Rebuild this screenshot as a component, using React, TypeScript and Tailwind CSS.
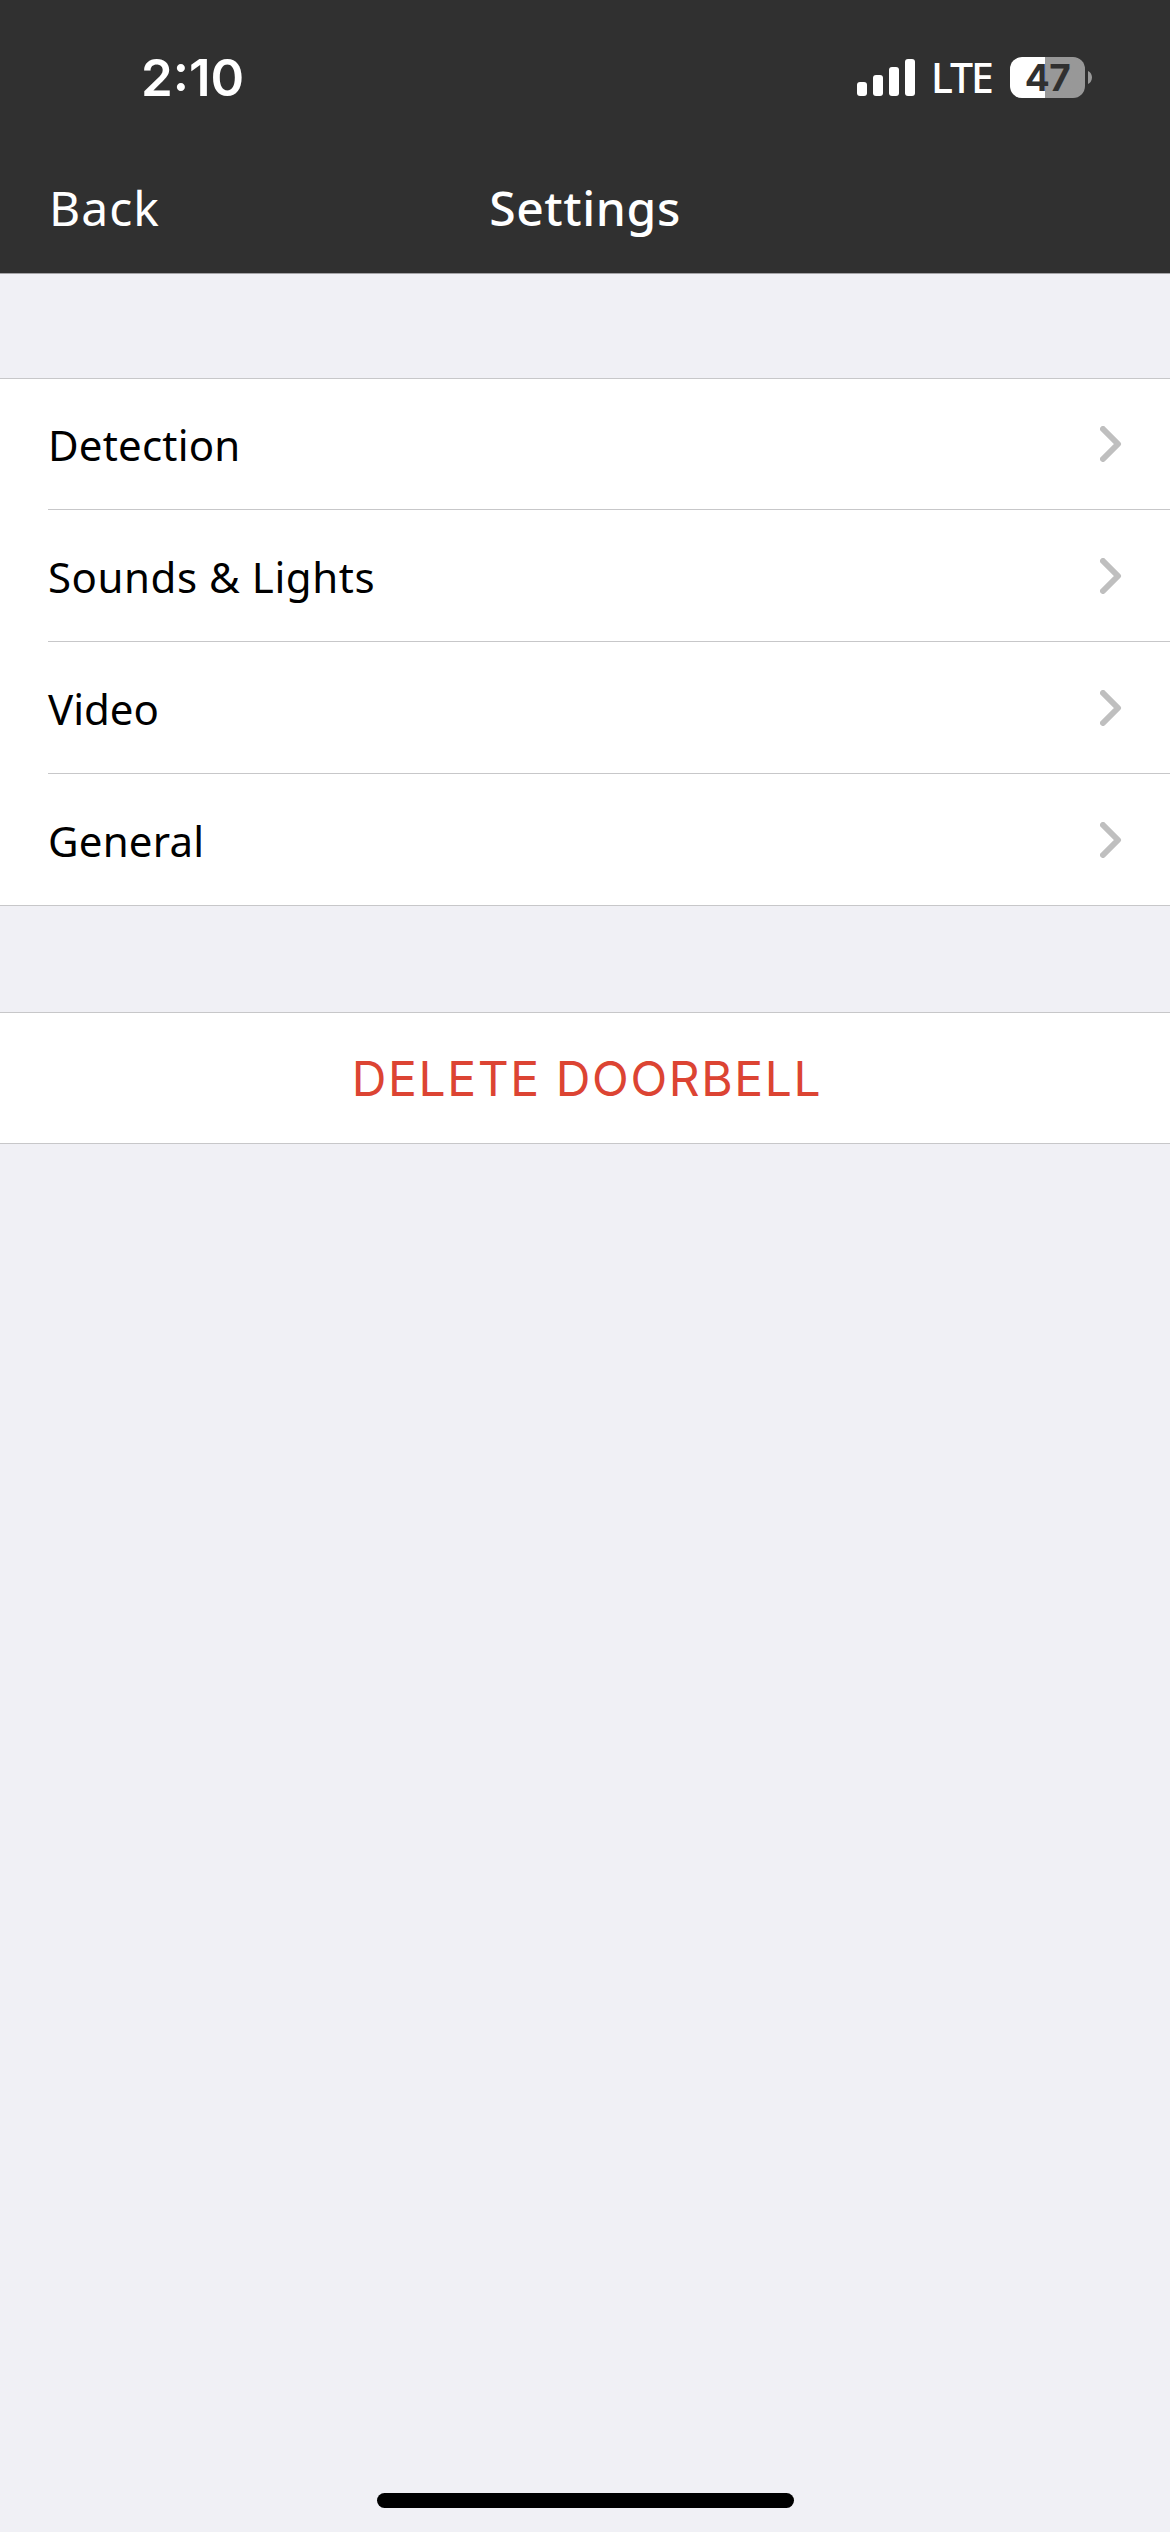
type SettingsItem = {
  label: string;
  className: string;
};

const items: SettingsItem[] = [
  { label: 'Detection', className: 'h-[131px] border-b tracking-[0.2px]' },
  { label: 'Sounds & Lights', className: 'h-[132px] border-b tracking-[0.55px]' },
  { label: 'Video', className: 'h-[132px] border-b' },
  { label: 'General', className: 'h-[131px] tracking-[0.2px]' },
];

function SignalBars() {
  return (
    <svg width="58" height="37" viewBox="0 0 58 37" fill="currentColor">
      <rect x="0" y="23" width="10" height="14" rx="3" />
      <rect x="16" y="16" width="10" height="21" rx="3" />
      <rect x="32" y="8" width="10" height="29" rx="3" />
      <rect x="48" y="0" width="10" height="37" rx="3" />
    </svg>
  );
}

function Battery() {
  return (
    <div className="flex items-center gap-[3px]">
      <div className="flex h-[41px] w-[75px] items-center justify-center rounded-[12px] bg-linear-to-r from-white from-47% to-[#989898] to-47%">
        <span className="font-['Inter',sans-serif] text-[37px] leading-[41px] font-bold tracking-[-0.5px] text-[#303030]">47</span>
      </div>
      <svg width="4" height="13" viewBox="0 0 4 13" fill="#989898">
        <path d="M0 0C2.4 1 4 3.6 4 6.5S2.4 12 0 13Z" />
      </svg>
    </div>
  );
}

function StatusBar() {
  return (
    <div className="flex h-[155px] items-center justify-between pr-[78px] pl-[141px]">
      <span className="font-['Inter',sans-serif] text-[51px] leading-none font-semibold">2:10</span>
      <div className="flex items-center">
        <SignalBars />
        <span className="mr-4 ml-4 w-[63px] text-[41px] leading-none font-medium tracking-[-2px]">LTE</span>
        <Battery />
      </div>
    </div>
  );
}

function Chevron() {
  return (
    <svg width="22" height="36" viewBox="0 0 22 36" fill="none" stroke="#bfbfbf" strokeWidth="6" strokeLinecap="round" strokeLinejoin="round">
      <path d="M3 3L18 18L3 33" />
    </svg>
  );
}

export default function App() {
  return (
    <div className="flex h-[2532px] w-[1170px] flex-col bg-[#f0f0f5] font-['Noto_Sans',sans-serif]">
      <header className="h-[274px] border-b border-[#a5a4a7] bg-[#303030] text-white">
        <StatusBar />
        <nav className="grid h-[105px] grid-cols-3 items-center px-12 text-[48px] leading-none">
          <button className="pl-px text-left tracking-[1px]">Back</button>
          <h1 className="text-center font-medium tracking-[0.6px]">Settings</h1>
        </nav>
      </header>

      <ul className="mt-[104px] border-y border-[#c7c7c9] bg-white">
        {items.map((item) => (
          <li key={item.label} className="pl-12">
            <div className={`flex items-center justify-between border-[#c7c7c9] pr-[48px] ${item.className}`}>
              <span className="pt-[2px] text-[42px] leading-none text-black">{item.label}</span>
              <Chevron />
            </div>
          </li>
        ))}
      </ul>

      <button className="mt-[106px] h-[132px] border-y border-[#c7c7c9] bg-white pt-[2px] pl-[4px] text-center font-['Inter',sans-serif] text-[48px] leading-none tracking-[1.6px] text-[#dc4433]">
        DELETE DOORBELL
      </button>

      <div className="mx-auto mt-auto mb-6 h-[15px] w-[417px] rounded-full bg-black" />
    </div>
  );
}
